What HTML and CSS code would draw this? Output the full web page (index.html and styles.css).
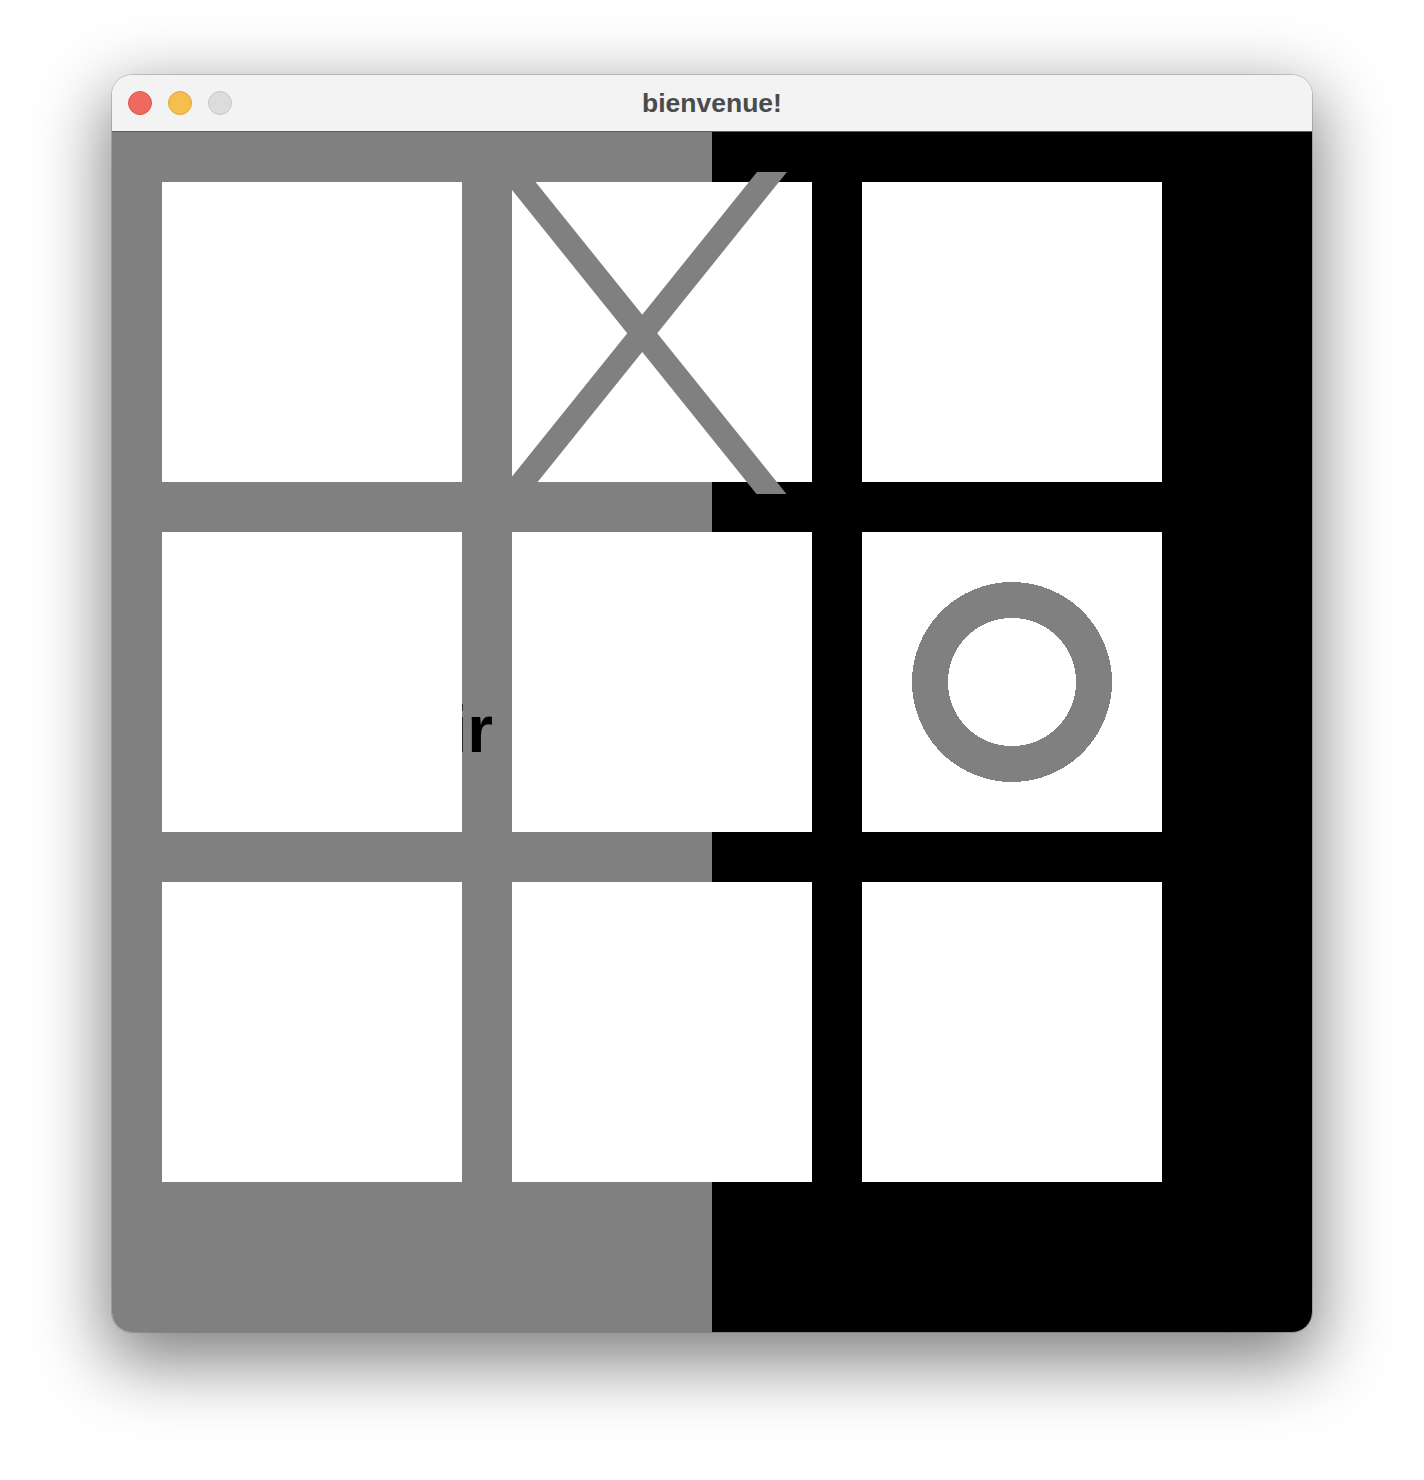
FILE: index.html
```html
<!DOCTYPE html>
<html lang="fr">
<head>
<meta charset="utf-8">
<title>bienvenue!</title>
<link rel="stylesheet" href="styles.css">
</head>
<body>
<div class="desk">
  <div class="window">
    <div class="titlebar">
      <div class="lights">
        <span class="light red"></span>
        <span class="light yellow"></span>
        <span class="light gray"></span>
      </div>
      <div class="title">bienvenue!</div>
      <div class="spacer"></div>
    </div>
    <div class="stage">
      <div class="bg">
        <div class="half half-gray"></div>
        <div class="half half-black"></div>
      </div>
      <div class="label-layer">
        <div class="label">Choisir</div>
      </div>
      <div class="board">
        <div class="cell"></div>
        <div class="cell"></div>
        <div class="cell"></div>
        <div class="cell"></div>
        <div class="cell"></div>
        <div class="cell"></div>
        <div class="cell"></div>
        <div class="cell"></div>
        <div class="cell"></div>
      </div>
      <svg class="marks" viewBox="0 0 1200 1200" width="1200" height="1200" aria-hidden="true">
        <polygon points="385.5,40 415.5,40 674.5,362 644.5,362" fill="#808080"/>
        <polygon points="645,40 675,40 416,362 386,362" fill="#808080"/>
        <circle cx="900" cy="550" r="82" fill="none" stroke="#808080" stroke-width="36" shape-rendering="crispEdges"/>
      </svg>
    </div>
  </div>
</div>
</body>
</html>
```
FILE: styles.css
```css
html, body {
  margin: 0;
  padding: 0;
  background: #ffffff;
}

.desk {
  padding: 75px 0 0 112px;
  width: 1424px;
  height: 1480px;
  box-sizing: border-box;
}

.window {
  width: 1200px;
  border-radius: 20px;
  overflow: hidden;
  box-shadow: 0 0 0 1px rgba(0, 0, 0, 0.16), 0 24px 70px 6px rgba(0, 0, 0, 0.5);
  background: #f2f3f2;
}

.titlebar {
  height: 56px;
  border-bottom: 1px solid #5e5e5e;
  background: #f2f3f2;
  display: grid;
  grid-template-columns: 1fr auto 1fr;
  align-items: center;
}

.lights {
  display: flex;
  gap: 16px;
  padding-left: 16px;
  align-items: center;
}

.light {
  width: 22px;
  height: 22px;
  border-radius: 50%;
  border: 1px solid transparent;
}

.red {
  background: #ee6a5f;
  border-color: #d9574c;
}

.yellow {
  background: #f5bf4f;
  border-color: #dca43c;
}

.gray {
  background: #dcdcdc;
  border-color: #c6c6c6;
}

.title {
  font-family: "Liberation Sans", Arial, sans-serif;
  font-weight: 700;
  font-size: 26.5px;
  line-height: 56px;
  color: #4b4b4b;
  text-align: center;
}

.stage {
  display: grid;
  width: 1200px;
  height: 1200px;
}

.stage > * {
  grid-area: 1 / 1;
}

.bg {
  display: flex;
}

.half {
  flex: 1;
}

.half-gray {
  background: #808080;
}

.half-black {
  background: #000000;
}

.label-layer {
  width: 381px;
  padding-top: 564px;
  text-align: right;
}

.label {
  font-family: "Liberation Sans", Arial, sans-serif;
  font-weight: 700;
  font-size: 66px;
  line-height: 66px;
  color: #000000;
  white-space: nowrap;
}

.board {
  display: grid;
  grid-template-columns: repeat(3, 300px);
  grid-template-rows: repeat(3, 300px);
  gap: 50px;
  padding: 50px;
  align-content: start;
}

.cell {
  background: #ffffff;
}

.marks {
  pointer-events: none;
  display: block;
}
```
